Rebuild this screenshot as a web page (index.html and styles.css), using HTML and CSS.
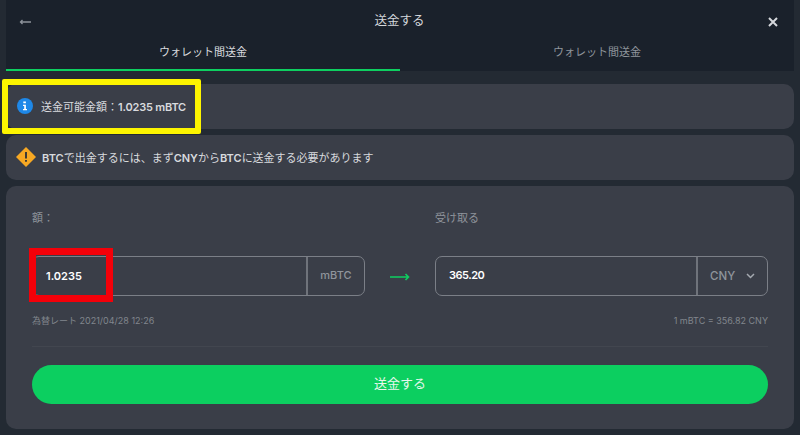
FILE: index.html
```html
<!DOCTYPE html>
<html lang="ja">
	<head>
		<meta charset="utf-8">
		<title>送金する</title>
		<link rel="stylesheet" href="styles.css">
	</head>
	<body>
		<div class="page">
			<div class="top">
				<div class="titlebar">
					<svg class="back" width="12" height="6" viewBox="0 0 12 6"><path d="M12 3H1.500M3.500 1L1.500 3l2 2" fill="none" stroke="#8d939b" stroke-width="1.300"/></svg>
					<div class="title">送金する</div>
					<svg class="close" width="10" height="10" viewBox="0 0 10 10"><path d="M1 1l8 8M9 1l-8 8" fill="none" stroke="#d5d8dc" stroke-width="2"/></svg>
				</div>
				<div class="tabs">
					<div class="tab active">ウォレット間送金</div>
					<div class="tab">ウォレット間送金</div>
				</div>
			</div>

			<div class="notice first">
				<svg width="16" height="16" viewBox="0 0 16 16"><circle cx="8" cy="8" r="8" fill="#1e88e8"/><path d="M6.300 3.500h2.600v1.800H6.300zM6 6.700h2.900V11H10v1.200H6V11h1.200V7.900H6z" fill="#fff"/></svg>
				<span>送金可能金額：<b>1.0235 mBTC</b></span>
			</div>
			<div class="notice">
				<svg width="20" height="20" viewBox="0 0 20 20"><path d="M10 0l10 10-10 10L0 10z" fill="#f7a823"/><path d="M9.100 5h1.800v6.500H9.100zM9.100 13h1.800v1.800H9.100z" fill="#2a2f38"/></svg>
				<span><b>BTC</b>で出金するには、まず<b>CNY</b>から<b>BTC</b>に送金する必要があります</span>
			</div>

			<div class="form">
				<div class="fields">
					<div class="col">
						<div class="label">額：</div>
						<div class="input">
							<div class="value">1.0235</div>
							<div class="unit">mBTC</div>
						</div>
						<div class="meta">為替レート 2021/04/28 12:26</div>
					</div>
					<svg class="arrow" width="20" height="8" viewBox="0 0 20 8"><path d="M0 4h18.500M15.500 1l3 3-3 3" fill="none" stroke="#0ecf60" stroke-width="1.600"/></svg>
					<div class="col">
						<div class="label">受け取る</div>
						<div class="input">
							<div class="value narrow">365.20</div>
							<div class="unit select">CNY
								<svg width="9" height="6" viewBox="0 0 9 6"><path d="M1 1l3.500 3.500L8 1" fill="none" stroke="#a4a9b0" stroke-width="1.500"/></svg>
							</div>
						</div>
						<div class="meta right">1 mBTC = 356.82 CNY</div>
					</div>
				</div>
				<div class="divider"></div>
				<div class="submit">送金する</div>
			</div>
		</div>

		<div class="mark yellow"></div>
		<div class="mark red"></div>
	</body>
</html>
```

FILE: styles.css
```css
html, body {
	margin: 0;
	height: 100%;
	overflow: hidden;
}

body {
	background: #232a33;
	color: #d8dade;
	font-family: Inter, "Noto Sans CJK JP", sans-serif;
	font-size: 11px;
}

.page {
	padding: 0 6px;
}

/* header */
.top {
	background: #1a212b;
	height: 71px;
	margin-bottom: 13px;
}

.titlebar {
	display: flex;
	align-items: center;
	justify-content: space-between;
	height: 39px;
	padding: 0 16px 0 13px;
}

.back, .close {
	margin-top: 4px;
}

.title {
	font-size: 12.500px;
	color: #d5d8dc;
}

.tabs {
	display: flex;
}

.tab {
	flex: 1;
	height: 32px;
	line-height: 27px;
	box-sizing: border-box;
	text-align: center;
	color: #8f959c;
	font-size: 11px;
}

.tab.active {
	color: #d8dade;
	border-bottom: 2px solid #0ecf60;
}

/* notices */
.notice {
	display: flex;
	align-items: center;
	gap: 6px;
	height: 45px;
	box-sizing: border-box;
	padding: 0 10px 2px;
	margin-bottom: 6px;
	background: #3a3e48;
	border-radius: 10px;
}

.notice.first {
	gap: 8px;
	padding-left: 11px;
}

.notice b {
	font-weight: 600;
}

.notice.first b {
	letter-spacing: -0.200px;
}

/* form */
.form {
	background: #3a3e48;
	border-radius: 10px;
	height: 243px;
	box-sizing: border-box;
	padding: 24px 26px 0;
}

.fields {
	display: flex;
	align-items: flex-start;
	justify-content: space-between;
}

.col {
	width: 333px;
}

.label {
	height: 46px;
	line-height: 16px;
	color: #8f949b;
	font-size: 11px;
}

.input {
	display: flex;
	height: 40px;
	box-sizing: border-box;
	border: 1px solid #7b7f87;
	border-radius: 7px;
}

.value {
	flex: 1;
	line-height: 38px;
	padding-left: 13px;
	color: #fff;
	font-size: 11px;
	font-weight: 600;
}

.value.narrow {
	line-height: 37px;
	letter-spacing: -0.500px;
}

.unit {
	width: 58px;
	box-sizing: border-box;
	border-left: 2px solid #6f737b;
	line-height: 37px;
	text-align: center;
	color: #8f949b;
	font-size: 11px;
	font-weight: 500;
}

.unit.select {
	width: 71px;
	display: flex;
	align-items: center;
	justify-content: space-between;
	padding: 0 12px 0 12px;
	font-size: 11.500px;
}

.arrow {
	margin-top: 63px;
}

.meta {
	margin-top: 17px;
	line-height: 16px;
	color: #81868d;
	font-size: 9px;
}

.meta.right {
	text-align: right;
}

.divider {
	border-top: 1px solid #42464f;
	margin-top: 17px;
}

.submit {
	margin-top: 18px;
	height: 39px;
	line-height: 36px;
	border-radius: 20px;
	background: #0ccf60;
	color: #e6f7ec;
	text-align: center;
	font-size: 13px;
}

/* annotation frames drawn over the screenshot */
.mark {
	position: absolute;
	box-sizing: border-box;
}

.yellow {
	left: 2px;
	top: 79px;
	width: 199px;
	height: 55px;
	border: 6px solid #fdf500;
	border-radius: 2px;
}

.red {
	left: 29px;
	top: 248px;
	width: 84px;
	height: 54px;
	border: 7px solid #f40009;
}
```
